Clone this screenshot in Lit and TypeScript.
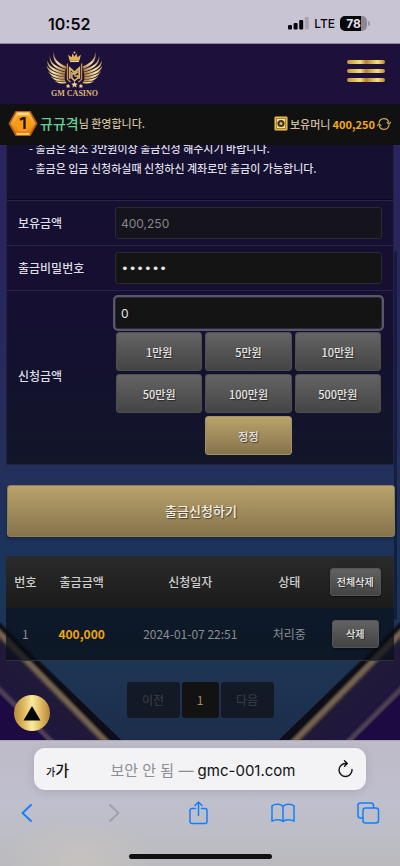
import { LitElement, html, svg, css } from "lit";
import { customElement, state } from "lit/decorators.js";
import { classMap } from "lit/directives/class-map.js";

const reset = css`
  :host { box-sizing: border-box; }
  * { box-sizing: border-box; }
  button, input {
    font-family: inherit; margin: 0; border: 0; background: none;
    padding: 0; color: inherit; line-height: inherit;
  }
  button { cursor: pointer; }
  svg { display: block; flex: none; }
`;

@customElement("phone-status")
class PhoneStatus extends LitElement {
  static styles = [reset, css`
    :host {
      display: flex; justify-content: space-between; align-items: center;
      height: 44px; padding: 4px 30px 0 48px; color: #08080c;
      background: #c9c4d3; border-bottom: 1px solid #8f8aa0;
      font-family: Inter, "Liberation Sans", sans-serif;
    }
    .time { font-size: 16px; font-weight: 600; }
    .right { display: flex; align-items: center; gap: 5px; }
    .net { font-size: 12px; font-weight: 500; }
    .battery { display: flex; align-items: center; gap: 1px; }
    .cell {
      width: 27px; height: 15px; border-radius: 5px; text-align: center;
      font-size: 12px; line-height: 15px; font-weight: 700; color: #e4e0ea;
      background: linear-gradient(90deg, #060608 78%, #8b8794 78%);
    }
    .nub { width: 2px; height: 5px; border-radius: 0 2px 2px 0; background: #9a96a4; }
  `];
  render() {
    return html`
      <span class="time">10:52</span>
      <div class="right">
        <svg width="21" height="13" viewBox="0 0 21 13">
          <rect x="0" y="8" width="4" height="4.6" rx="1" fill="#08080c"/>
          <rect x="5.6" y="6" width="4" height="6.6" rx="1" fill="#08080c"/>
          <rect x="11.2" y="3" width="4" height="9.6" rx="1" fill="#08080c"/>
          <rect x="16.8" y="0" width="4" height="12.6" rx="1" fill="#a8a4b2"/>
        </svg>
        <span class="net">LTE</span>
        <div class="battery"><span class="cell">78</span><span class="nub"></span></div>
      </div>`;
  }
}

const wing = svg`
  <g fill="url(#gold)">
    <path d="M8 .5C8 8 12 12 21 15.500L20 18C10 14 6 8 8 .5Z"/>
    <path d="M4 4.500C4.500 11 9 15.500 20 18.500L19.500 20.800C8 18 2.500 11.500 4 4.500Z"/>
    <path d="M1.500 9C2.500 14.500 8 18.500 19.500 21.200L19.200 23.300C7 21 0 15.500 1.500 9Z"/>
    <path d="M.8 14.500C3 19 9 22 19.300 23.800L19 25.800C8 25 1 20.500 .8 14.500Z"/>
    <path d="M2 20C5 23.500 11 25.500 19.200 26.300L19 28.200C10 28.300 4 25 2 20Z"/>
    <path d="M4.500 25C8 27.500 13 28.700 19.200 28.700L19.500 30.500C12 31.300 7.500 29 4.500 25Z"/>
    <path d="M8.500 30C12 31.300 16 31.300 20 30.800L21 32.500C16.500 33.500 12 32.800 8.500 30Z"/>
  </g>
  <path d="M21.800 12.500V28.500L25 31.500" fill="none" stroke="#c0924a" stroke-width="1.3"/>`;

@customElement("site-header")
class SiteHeader extends LitElement {
  static styles = [reset, css`
    :host {
      display: block; color: #cdbf9f;
      font-family: "Noto Sans CJK KR", "Noto Sans", sans-serif;
    }
    .top {
      display: flex; justify-content: space-between; align-items: flex-start;
      height: 60px; padding: 7px 15px 0 46px; background: #1d113c;
    }
    .logo {
      display: flex; flex-direction: column; align-items: center;
      text-decoration: none; color: #d9b878;
      font-family: "Liberation Serif", serif; font-size: 8px; line-height: 10px; font-weight: 700;
    }
    .menu { display: flex; flex-direction: column; gap: 5px; padding-top: 9px; }
    .menu span {
      width: 38px; height: 4px; border-radius: 2px;
      background: linear-gradient(90deg, #c6923f, #f3df7c 35%, #b87f35 50%, #f3df7c 80%, #c08a3c);
    }
    .bar {
      display: flex; justify-content: space-between; align-items: center;
      height: 41px; padding: 0 9px 2px 8px; background: #111112;
    }
    .group { display: flex; align-items: center; gap: 2px; font-size: 11px; line-height: 20px; font-weight: 500; }
    .nick { color: #66cf95; font-size: 14px; font-weight: 500; }
    .hello { display: flex; align-items: center; padding-bottom: 1px; }
    .money { color: #f5a90e; font-weight: 700; }
  `];
  render() {
    return html`
      <div class="top">
        <a class="logo" href="#">
          <svg width="57" height="38" viewBox="0 0 58 38">
            <defs>
              <linearGradient id="gold" x1="0" y1="0" x2="1" y2="1">
                <stop offset="0" stop-color="#a77a38"/><stop offset=".5" stop-color="#f4e3a4"/>
                <stop offset="1" stop-color="#a5712f"/>
              </linearGradient>
            </defs>
            ${wing}
            <g transform="translate(58 0) scale(-1 1)">${wing}</g>
            <path d="M24 9.500 L22.500 3.500 L26 6 L27 2 L29 5.500 L31 2 L32 6 L35.500 3.500 L34 9.500Z" fill="#e0b25c"/>
            <path d="M24.500 10.300H33.500" stroke="#f4dc94" stroke-width="1.2"/>
            <circle cx="29" cy="1.300" r="1" fill="#e8c77b"/>
            <g fill="none" stroke="#dcb66a" stroke-width="1.800">
              <path d="M24.200 28 V17 L29 21.500 L33.800 17 V28"/>
              <path d="M33 20.500 L29 23.500 L26.300 22 V27 L29 30 L32.500 27 V25 H29" stroke-width="1.500"/>
            </g>
            <path d="M29 30.500l1 2.200 2.300.2-1.700 1.600.5 2.300-2.100-1.200-2.100 1.200.5-2.300-1.700-1.600 2.300-.2zM22.500 33l.8 1.500 1.500.2-1.100 1.100.3 1.500-1.500-.8-1.500.8.3-1.500-1.100-1.100 1.500-.2zM35.500 33l.8 1.500 1.500.2-1.100 1.100.3 1.500-1.500-.8-1.500.8.3-1.500-1.100-1.100 1.500-.2z" fill="#f0d48c"/>
          </svg>
          GM CASINO
        </a>
        <button class="menu" aria-label="메뉴"><span></span><span></span><span></span></button>
      </div>
      <div class="bar">
        <div class="group">
          <svg width="30" height="27" viewBox="0 0 30 27">
            <defs><linearGradient id="lv" x1="0" y1="0" x2="0" y2="1">
              <stop offset="0" stop-color="#ffc14a"/><stop offset="1" stop-color="#e67c08"/>
            </linearGradient></defs>
            <path d="M7.500 1H22.500L29.500 13.500 22.500 26H7.500L.5 13.500Z" fill="#b3620f"/>
            <path d="M8.500 2.500H21.500L27.500 13.500 21.500 24H8.500L2.500 13.500Z" fill="url(#lv)"/>
            <path d="M8.500 2.500H21.500L19.500 5.500H10.500Z" fill="#ffd98a"/>
            <path d="M8.500 24H21.500" stroke="#ffe09a" stroke-width="1.500"/>
            <path d="M10.500 5.500H19.500L24 13.500 19.500 21H10.500L6 13.500Z" fill="#f79a17"/>
            <path d="M12 9.800L15 8.200H16.500V19" fill="none" stroke="#1c1206" stroke-width="2.300"/>
          </svg>
          <span class="hello"><span class="nick">규규격</span><span>님 환영합니다.</span></span>
        </div>
        <div class="group">
          <svg width="14" height="16" viewBox="0 0 14 16">
            <rect x=".5" y=".5" width="13" height="14" rx="1.500" fill="#e3bd55" stroke="#8a692a"/>
            <rect x="2.500" y="2.500" width="9" height="10" fill="#f6e196" stroke="#ab832f"/>
            <circle cx="7" cy="7.500" r="3.600" fill="#3e321a"/>
            <circle cx="7" cy="7.500" r="1.500" fill="#d8b95e"/>
          </svg>
          <span>보유머니</span><span class="money">400,250</span>
          <button aria-label="새로고침">
            <svg width="14" height="14" viewBox="0 0 14 14" fill="none" stroke="#c9a75c" stroke-width="1.200">
              <path d="M2 6A5 5 0 0 1 11.800 5.500M12 8A5 5 0 0 1 2.200 8.500"/>
              <path d="M9.800 5.200L12 7.200 14 4.800M0 9.200L2 6.900 4.200 8.800"/>
            </svg>
          </button>
        </div>
      </div>`;
  }
}

@customElement("withdraw-page")
class WithdrawPage extends LitElement {
  @state() amount = "0";

  static styles = [reset, css`
    :host {
      display: block; position: relative; overflow: hidden; color: #dedde4;
      font-family: "Noto Sans CJK KR", "Noto Sans", sans-serif;
      font-size: 12px; line-height: 20px;
      background: linear-gradient(180deg, #2a2360 0%, #28265d 20%, #232f5c 53%, #1b345b 70%, #1d3452 90%, #1c2e4c 100%);
    }
    .rays { position: absolute; bottom: 0; width: 121px; height: 118px; }
    .rays.left { left: 0; }
    .rays.right { right: 0; transform: scaleX(-1); }
    .scroll {
      position: absolute; right: 3px; top: 106px; bottom: 120px; width: 3px;
      border-radius: 2px; background: rgba(15, 18, 45, .6);
    }
    .content { position: relative; padding: 0 6px 22px; }
    .panel {
      background: linear-gradient(180deg, #150f30 0%, #160f32 45%, #13122e 75%, #121629 100%);
      border: 1px solid #24223e; border-top: 0;
    }
    .notice {
      margin: 0; padding: 0 22px 21px; list-style: none; font-size: 11px; font-weight: 500;
      margin-top: -7px; border-bottom: 1px solid #0b0820;
    }
    .row {
      display: grid; grid-template-columns: 97px 1fr; align-items: center;
      padding: 6px 11px; border-top: 1px solid #28244a;
    }
    .row.amount { padding-bottom: 9px; }
    .label { font-weight: 500; }
    .field {
      display: block; width: 100%; height: 32px; padding: 0 5px;
      border: 1px solid #2b2b31; border-radius: 3px;
      background: #141415; color: #e6e6e6; font-family: Inter, sans-serif; font-size: 12px;
    }
    .field:disabled { background: #15131c; color: #87868c; }
    .field.active { outline: 0; box-shadow: 0 0 0 2px #5b5670; }
    .field.pin { font-family: "DejaVu Sans", sans-serif; font-size: 13px; }
    .keys { display: grid; grid-template-columns: repeat(3, 1fr); gap: 3px; padding: 3px 1px 0; }
    .key {
      height: 39px; border: 1px solid #4f4f52; border-radius: 3px; font-size: 11px; font-weight: 500;
      color: #e6e4e4; text-shadow: 1px 1px 1px rgba(0, 0, 0, .5);
      background: linear-gradient(180deg, #646464, #444444);
    }
    .gold { border-color: #8f7d53; background: linear-gradient(180deg, #b9a36b, #85734c); }
    .key.reset { grid-column: 2; border-color: #a39160; }
    .submit {
      display: block; width: 100%; height: 52px; margin: 20px 0 19px 1px; padding: 0;
      border-width: 1px; border-style: solid; border-radius: 3px;
      font-size: 13px; font-weight: 500; color: #f1eee6; text-shadow: 1px 1px 1px rgba(0, 0, 0, .5);
      box-shadow: 0 2px 3px rgba(0, 0, 0, .25);
    }
    .list { width: 100%; table-layout: fixed; border-collapse: collapse; text-align: center; }
    .list th, .list td { padding: 0; height: 52px; }
    .list thead { background: linear-gradient(180deg, #2a2a2b, #1b1b1b); }
    .list th { font-weight: 500; color: #cfcfcf; }
    .list tbody { background: rgba(8, 14, 22, .72); border-bottom: 1px solid #2a323c; }
    .list td { color: #8b8e93; }
    .list .sum { color: #f0a50d; font-weight: 700; }
    .c1 { width: 10%; } .c2 { width: 19%; } .c3 { width: 37%; } .c4 { width: 14%; } .c5 { width: 20%; }
    .small {
      height: 28px; min-width: 47px; padding: 0 6px; border: 1px solid #555558; border-radius: 3px;
      font-size: 10px; font-weight: 500; color: #eeeeee; line-height: 14px;
      background: linear-gradient(180deg, #626262, #434343);
      text-shadow: 1px 1px 1px rgba(0, 0, 0, .6); box-shadow: 0 1px 2px rgba(0, 0, 0, .5);
    }
    .pager { display: flex; justify-content: center; gap: 2px; margin-top: 21px; }
    .page {
      width: 53px; height: 36px; border-radius: 3px; font-size: 12px;
      background: #131a25; color: #3b4047;
    }
    .page.current { width: 37px; background: #121213; color: #a6925e; }
    .up {
      position: absolute; left: 14px; bottom: 9px; width: 36px; height: 36px;
      border-radius: 50%; display: flex; justify-content: center; align-items: center;
      background: linear-gradient(90deg, #bb8a3a, #e2bd66 30%, #fbeb9f 50%, #e0b962 75%, #b5853a);
    }
  `];

  private rays(side: string) {
    return html`
      <svg class="rays ${side}" viewBox="0 0 121 118" preserveAspectRatio="none">
        <defs>
          <linearGradient id="band" x1="0" y1="1" x2=".5" y2=".45">
            <stop offset="0" stop-color="#1f1442"/><stop offset="1" stop-color="#201a36"/>
          </linearGradient>
          <filter id="soft" x="-20%" y="-20%" width="140%" height="140%"><feGaussianBlur stdDeviation="1"/></filter>
        </defs>
        <path d="M0 2L121 118H0Z" fill="#120c1f"/>
        <path d="M0 12L104 118H0Z" fill="url(#band)"/>
        <g filter="url(#soft)" fill="none">
          <path d="M-6 0L118 122" stroke="#0c0814" stroke-width="7"/>
          <path d="M-6 6L108 122" stroke="#75654f" stroke-width="6"/>
          <path d="M-6 10L104 122" stroke="#463a42" stroke-width="2"/>
          <path d="M-6 62L56 124" stroke="#4f3f58" stroke-width="5"/>
        </g>
        <path d="M0 73L46 118H0Z" fill="#1c0a43"/>
      </svg>`;
  }

  private add(n: number) {
    this.amount = (Number(this.amount.replace(/,/g, "")) + n * 10000).toLocaleString("en-US");
  }

  render() {
    const units = [1, 5, 10, 50, 100, 500];
    const pages = ["이전", "1", "다음"];
    return html`
      ${this.rays("left")}${this.rays("right")}
      <div class="scroll"></div>
      <div class="content">
        <form class="panel" @submit=${(e: Event) => e.preventDefault()}>
          <ul class="notice">
            <li>- 출금은 최소 3만원이상 출금신청 해주시기 바랍니다.</li>
            <li>- 출금은 입금 신청하실때 신청하신 계좌로만 출금이 가능합니다.</li>
          </ul>
          <div class="row">
            <label class="label" for="held">보유금액</label>
            <input class="field" id="held" value="400,250" disabled>
          </div>
          <div class="row">
            <label class="label" for="pin">출금비밀번호</label>
            <input class="field pin" id="pin" type="password" value="123456">
          </div>
          <div class="row amount">
            <label class="label" for="amount">신청금액</label>
            <div>
              <input class="field active" id="amount" .value=${this.amount}>
              <div class="keys">
                ${units.map(n => html`<button type="button" class="key" @click=${() => this.add(n)}>${n}만원</button>`)}
                <button type="button" class="key gold reset" @click=${() => (this.amount = "0")}>정정</button>
              </div>
            </div>
          </div>
        </form>
        <button class="submit gold">출금신청하기</button>
        <table class="list">
          <colgroup><col class="c1"><col class="c2"><col class="c3"><col class="c4"><col class="c5"></colgroup>
          <thead>
            <tr><th>번호</th><th>출금금액</th><th>신청일자</th><th>상태</th><th><button class="small">전체삭제</button></th></tr>
          </thead>
          <tbody>
            <tr><td>1</td><td class="sum">400,000</td><td>2024-01-07 22:51</td><td>처리중</td><td><button class="small">삭제</button></td></tr>
          </tbody>
        </table>
        <div class="pager">
          ${pages.map(p => html`<button class=${classMap({ page: true, current: p === "1" })}>${p}</button>`)}
        </div>
      </div>
      <button class="up" aria-label="위로">
        <svg width="18" height="16" viewBox="0 0 18 16"><path d="M9 1L17.500 15.500H.5Z" fill="#050505"/></svg>
      </button>`;
  }
}

@customElement("browser-bar")
class BrowserBar extends LitElement {
  static styles = [reset, css`
    :host {
      display: flex; flex-direction: column; padding: 7px 0 7px; border-top: 1px solid #a9a6b8;
      background:
        radial-gradient(ellipse 80px 40px at 80px 118px, #c6c2bf, transparent),
        linear-gradient(180deg, #bfbbc8 0%, #bfbfcd 50%, #bdbec6 70%, #bababf 100%);
      font-family: Inter, "Noto Sans CJK KR", sans-serif;
    }
    .address {
      display: flex; align-items: center; justify-content: space-between; height: 42px;
      margin: 0 34px; padding: 0 12px; border-radius: 11px; background: #f3f2f4; color: #111113;
      box-shadow: 0 2px 8px rgba(60, 60, 80, .15);
    }
    .size { display: flex; align-items: baseline; font-size: 15px; font-weight: 500; }
    .size small { font-size: 10px; }
    .url { font-size: 15px; white-space: nowrap; }
    .url span { color: #8d8d92; }
    .tools {
      display: flex; align-items: center; justify-content: space-between;
      padding: 0 20px 0 15px; margin-top: 11px; color: #157efb;
    }
    .tools button:disabled { color: #a0a0a8; }
    .tools svg { fill: none; stroke: currentColor; stroke-width: 1.500; stroke-linecap: round; stroke-linejoin: round; }
    .home { width: 143px; height: 5px; margin: auto auto 0; border-radius: 3px; background: #111114; }
  `];
  render() {
    return html`
      <div class="address">
        <button class="size" aria-label="글자 크기"><small>가</small>가</button>
        <button class="url"><span>보안 안 됨 — </span>gmc-001.com</button>
        <button aria-label="새로고침">
          <svg width="17" height="18" viewBox="0 0 17 18" fill="none" stroke="#111113" stroke-width="1.400" stroke-linecap="round" stroke-linejoin="round">
            <path d="M15 9.500A6.500 6.500 0 1 1 8.500 3.500H10M7.500.8L10.300 3.500 7.500 6.300"/>
          </svg>
        </button>
      </div>
      <div class="tools">
        <button aria-label="뒤로"><svg width="24" height="24" viewBox="0 0 24 24"><path d="M16 4L7.500 12 16 20" stroke-width="1.900"/></svg></button>
        <button aria-label="앞으로" disabled><svg width="24" height="24" viewBox="0 0 24 24"><path d="M10 4L18.500 12 10 20" stroke-width="1.900"/></svg></button>
        <button aria-label="공유"><svg width="24" height="24" viewBox="0 0 24 24"><path d="M9.500 7.500H6A2 2 0 0 0 4 9.500V20.500A2 2 0 0 0 6 22.500H19A2 2 0 0 0 21 20.500V9.500A2 2 0 0 0 19 7.500H15.500M12.500 14.500V1M9 4.500L12.500 1 16 4.500"/></svg></button>
        <button aria-label="책갈피"><svg width="24" height="24" viewBox="0 0 24 24"><path d="M12 5.500C10 2.800 4.500 2.500 1 4.800V20.200C4.500 18 10 18.300 12 20.500C14 18.300 19.500 18 23 20.200V4.800C19.500 2.500 14 2.800 12 5.500ZM12 5.500V20.500"/></svg></button>
        <button aria-label="탭"><svg width="24" height="24" viewBox="0 0 24 24"><rect x="7" y="7" width="15.500" height="15" rx="2.500"/><path d="M7 17H4.500A2.500 2.500 0 0 1 2 14.500V4.500A2.500 2.500 0 0 1 4.500 2H15A2.500 2.500 0 0 1 17.500 4.500V7"/></svg></button>
      </div>
      <div class="home"></div>`;
  }
}

@customElement("app-root")
class AppRoot extends LitElement {
  static styles = css`
    :host { display: flex; flex-direction: column; min-height: 100vh; }
    phone-status, site-header { flex: none; }
    withdraw-page { flex: 1; }
    browser-bar { box-sizing: border-box; flex: none; min-height: 126px; }
  `;
  render() {
    return html`
      <phone-status></phone-status>
      <site-header></site-header>
      <withdraw-page></withdraw-page>
      <browser-bar></browser-bar>`;
  }
}
